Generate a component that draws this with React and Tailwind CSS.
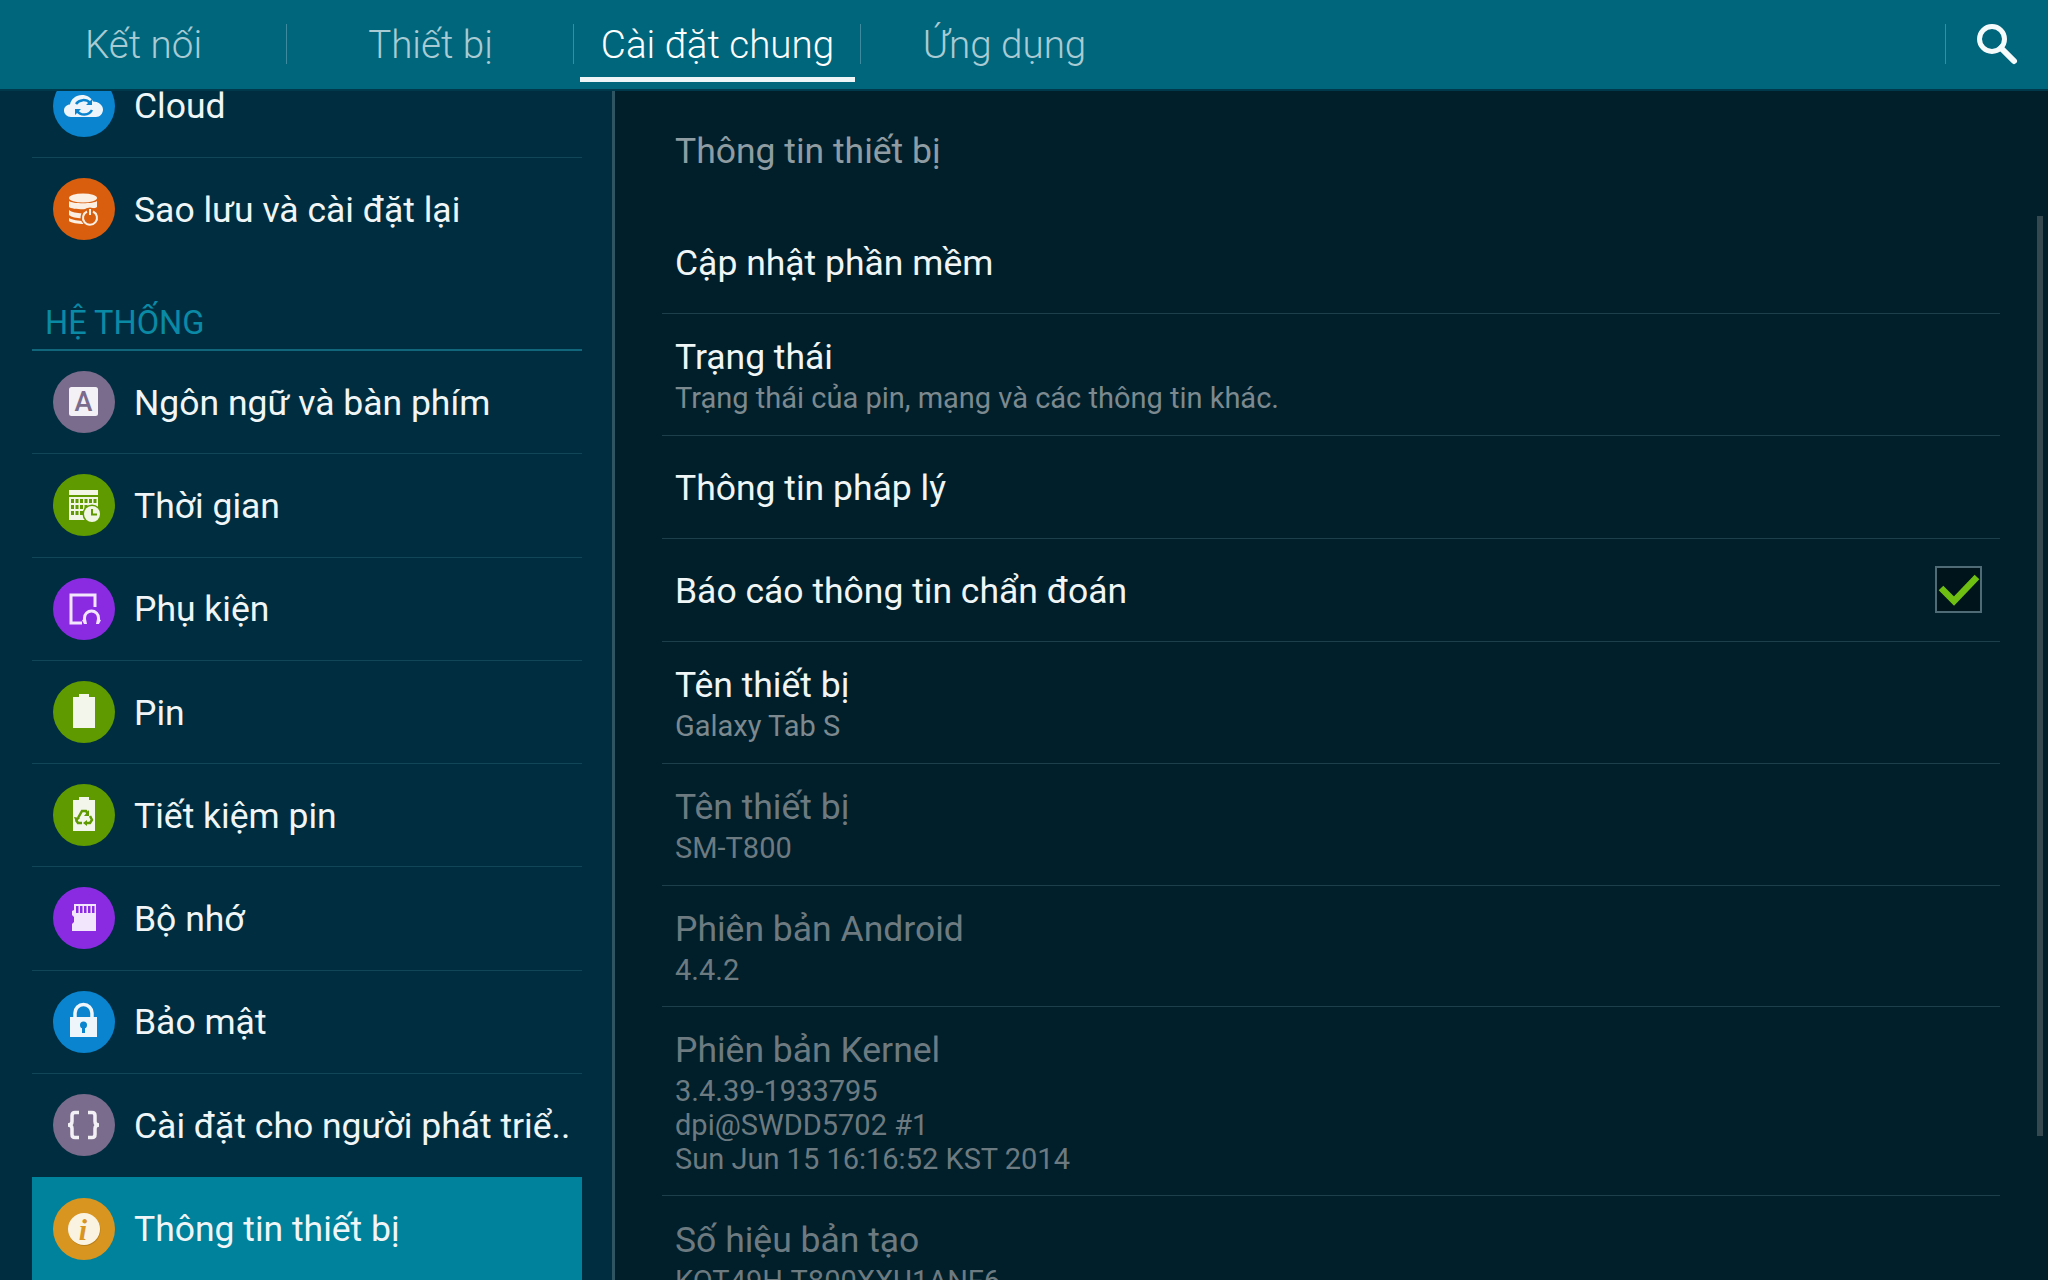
const FONT = { fontFamily: 'Roboto, "Noto Sans", sans-serif' }

function CloudIcon() {
  return (
    <svg viewBox="0 0 62 62" className="w-full h-full">
      <path d="M18 42c-4 0-7-3-7-6.500 0-3.500 3-6 6-6 1-5.500 6-9.500 12-9.500 5 0 9 2.500 11 6.500 5 0 10 3.500 10 8 0 4-3 7.500-7 7.500z" fill="#eef6fb" />
      <path d="M23 29a9 9 0 0 1 14-1M39 35a9 9 0 0 1-15 1" fill="none" stroke="#0a84cf" strokeWidth="2.500" />
      <path d="M39 24v6h-6zM22 40v-6h6z" fill="#0a84cf" />
    </svg>
  )
}

function BackupIcon() {
  return (
    <svg viewBox="0 0 62 62" className="w-full h-full">
      <ellipse cx="30" cy="20" rx="14" ry="4.500" fill="#fbeee3" />
      <path d="M16 23c3 3 25 3 28 0v6c-3 3-25 3-28 0zM16 32c3 3 12 3.500 16 3v5c-5 .5-13 0-16-3zM16 40c3 2 10 3 15 3v3c-6 0-13-1-15-3z" fill="#fbeee3" />
      <circle cx="37" cy="39" r="9.500" fill="#d95f0e" />
      <path d="M34 33.500a7 7 0 1 0 6 0" fill="none" stroke="#fbeee3" strokeWidth="2" />
      <path d="M37 31v6" stroke="#fbeee3" strokeWidth="2" />
    </svg>
  )
}

function LanguageIcon() {
  return (
    <svg viewBox="0 0 62 62" className="w-full h-full">
      <rect x="16" y="16" width="29" height="29" rx="2.500" fill="#f3f1f6" />
      <text x="30.500" y="40" textAnchor="middle" fontFamily="Roboto" fontWeight="500" fontSize="27" fill="#7a6c8c">A</text>
    </svg>
  )
}

function TimeIcon() {
  const cells = []
  for (let r = 0; r < 3; r++) {
    for (let c = 0; c < 6; c++) {
      if (r > 0 && c > 2 && !(r === 1 && c === 3)) continue
      cells.push(<rect key={`${r}-${c}`} x={18 + c * 4.500} y={25 + r * 6} width="3" height="4" fill="#5f9a00" />)
    }
  }
  return (
    <svg viewBox="0 0 62 62" className="w-full h-full">
      <rect x="16" y="16" width="29" height="5" fill="#f1f7e4" />
      <rect x="16" y="23" width="29" height="23" fill="#f1f7e4" />
      {cells}
      <circle cx="39" cy="40" r="9.500" fill="#5f9a00" />
      <circle cx="39" cy="40" r="8" fill="#f1f7e4" />
      <path d="M39 35v5.500h5" fill="none" stroke="#5f9a00" strokeWidth="2" />
    </svg>
  )
}

function AccessoryIcon() {
  return (
    <svg viewBox="0 0 62 62" className="w-full h-full">
      <path d="M29 45h-11v-28h24v12" fill="none" stroke="#f2e6fc" strokeWidth="3" />
      <path d="M31.500 44v-4a7 7 0 0 1 14 0v4" fill="none" stroke="#f2e6fc" strokeWidth="3" />
      <path d="M29 42l4-1 1 5h-3zM48 42l-4-1-1 5h3z" fill="#f2e6fc" />
    </svg>
  )
}

function BatteryIcon() {
  return (
    <svg viewBox="0 0 62 62" className="w-full h-full">
      <path d="M26 13h10v3h6v31h-22v-31h6z" fill="#f3f6ea" />
    </svg>
  )
}

function SaverIcon() {
  return (
    <svg viewBox="0 0 62 62" className="w-full h-full">
      <path d="M26 13h10v3h6v31h-22v-31h6z" fill="#f3f6ea" />
      <g fill="none" stroke="#5f9a00" strokeWidth="2.500">
        <path d="M25 34l4-7h4l2 3" />
        <path d="M37 32l2 4-2 3h-5" />
        <path d="M29 39h-4l-2-3" />
      </g>
      <path d="M36 26v6h-5zM34 36v6l-4-3zM21 33l6 1-4 4z" fill="#5f9a00" />
    </svg>
  )
}

function StorageIcon() {
  return (
    <svg viewBox="0 0 62 62" className="w-full h-full">
      <path d="M21 17h22v27h-24v-7l2-2v-5l-2-2v-4l2-1z" fill="#f2e6fc" />
      <g fill="#8a2be2">
        <rect x="23" y="19" width="2.500" height="7" />
        <rect x="27" y="19" width="2.500" height="7" />
        <rect x="31" y="19" width="2.500" height="7" />
        <rect x="35" y="19" width="2.500" height="7" />
        <rect x="39" y="19" width="2.500" height="7" />
      </g>
    </svg>
  )
}

function LockIcon() {
  return (
    <svg viewBox="0 0 62 62" className="w-full h-full">
      <path d="M22 27v-5a8.500 8.500 0 0 1 17 0v5" fill="none" stroke="#eef6fb" strokeWidth="3.500" />
      <rect x="17" y="26" width="27" height="20" fill="#eef6fb" />
      <circle cx="30.500" cy="34" r="3.500" fill="#0a84cf" />
      <rect x="29" y="35" width="3" height="7" fill="#0a84cf" />
    </svg>
  )
}

function DevIcon() {
  return (
    <svg viewBox="0 0 62 62" className="w-full h-full">
      <g fill="none" stroke="#f3f1f6" strokeWidth="3.500">
        <path d="M26 18.500h-4c-2 0-3 1-3 3v6c0 2-1.500 3.500-4 3.500 2.500 0 4 1.500 4 3.500v6c0 2 1 3 3 3h4" />
        <path d="M35 18.500h4c2 0 3 1 3 3v6c0 2 1.500 3.500 4 3.500-2.500 0-4 1.500-4 3.500v6c0 2-1 3-3 3h-4" />
      </g>
    </svg>
  )
}

function InfoIcon() {
  return (
    <svg viewBox="0 0 62 62" className="w-full h-full">
      <circle cx="31.500" cy="32" r="16" fill="#b9801a" />
      <circle cx="31" cy="31" r="16" fill="#fbf3e2" />
      <text x="30" y="42" textAnchor="middle" fontFamily="Liberation Serif" fontWeight="700" fontStyle="italic" fontSize="30" fill="#d8951f">i</text>
    </svg>
  )
}

function NavRow({ label, color, icon, active, last }) {
  return (
    <div className={`h-[103.25px] shrink-0 flex items-center pl-[21px] ${active ? 'bg-[#00819c]' : ''} ${last ? '' : 'border-b border-[#114558]'}`}>
      <div className={`w-[62px] h-[62px] rounded-full shrink-0 ${color}`}>{icon}</div>
      <span className="ml-[19px] pt-[3px] text-[35.5px] leading-none text-[#f0f6f7] whitespace-nowrap">{label}</span>
    </div>
  )
}

function InfoRow({ title, lines, height, dim, checked, last }) {
  const titleColor = dim ? 'text-[#6d7a80]' : 'text-[#f0f5f6]'
  const subColor = dim ? 'text-[#6d7a80]' : 'text-[#7c898e]'
  return (
    <div className={`${height} shrink-0 flex items-center justify-between px-[13px] ${last ? '' : 'border-b border-[#1d3f4b]'}`}>
      <div className="pt-[2px]">
        <div className={`text-[35.5px] leading-[42px] ${titleColor}`}>{title}</div>
        {lines && (
          <div className={`mt-[3px] text-[29px] leading-[34px] ${subColor}`}>
            {lines.map((l) => (
              <div key={l}>{l}</div>
            ))}
          </div>
        )}
      </div>
      {checked && (
        <div className="w-[47px] h-[47px] mr-[5px] mb-[2px] border-2 border-[#4f6b75] bg-[#00141c] shrink-0">
          <svg viewBox="0 0 43 43" className="w-full h-full">
            <path d="M4 20l13 13 23-24" fill="none" stroke="#6fbf12" strokeWidth="6.500" />
          </svg>
        </div>
      )}
    </div>
  )
}

const TABS = ['Kết nối', 'Thiết bị', 'Cài đặt chung', 'Ứng dụng']

export default function App() {
  return (
    <div className="relative w-[2048px] h-[1280px] overflow-hidden flex flex-col bg-[#001f2b]" style={FONT}>
      {/* top tab bar */}
      <div className="h-[91px] shrink-0 flex bg-[#00667c] border-b-2 border-[#00384c]">
        {TABS.map((t, i) => (
          <div key={t} className="relative w-[287px] shrink-0 flex items-center justify-center">
            <span className={`text-[38.6px] leading-none font-light pt-[1px] ${i === 2 ? 'text-white' : 'text-[#a9cbd3]'}`}>{t}</span>
            {i < 3 && <div className="absolute right-0 top-[24px] h-[40px] w-px bg-[#3d8b9c]" />}
            {i === 2 && <div className="absolute left-[6px] right-[6px] top-[77px] h-[5px] bg-[#eef5f6]" />}
          </div>
        ))}
        <div className="flex-1" />
        <div className="w-[103px] shrink-0 flex items-start border-l border-[#3d8b9c] mt-[24px] h-[40px]">
          <svg viewBox="0 0 50 50" className="w-[50px] h-[50px] ml-[24px] mt-[-7px] overflow-visible">
            <circle cx="22" cy="22" r="12.500" fill="none" stroke="#f5fafb" strokeWidth="5" />
            <path d="M31 31l13 13" stroke="#f5fafb" strokeWidth="6" strokeLinecap="round" />
          </svg>
        </div>
      </div>

      <div className="flex-1 min-h-0 flex">
        {/* left list */}
        <div className="w-[615px] shrink-0 bg-[#002e40] border-r-[3px] border-[#2f5563] overflow-hidden pl-8 pr-[30px]">
          <div className="-mt-[36.5px] flex flex-col">
            <NavRow label="Cloud" color="bg-[#0a84cf]" icon={<CloudIcon />} />
            <NavRow label="Sao lưu và cài đặt lại" color="bg-[#d95f0e]" icon={<BackupIcon />} last />
            <div className="h-[90px] shrink-0 flex items-end pl-[13px] pb-[10px] border-b-2 border-[#12667c] text-[32.5px] leading-none text-[#0b8aa6]">
              HỆ THỐNG
            </div>
            <NavRow label="Ngôn ngữ và bàn phím" color="bg-[#7a6c8c]" icon={<LanguageIcon />} />
            <NavRow label="Thời gian" color="bg-[#5f9a00]" icon={<TimeIcon />} />
            <NavRow label="Phụ kiện" color="bg-[#8a2be2]" icon={<AccessoryIcon />} />
            <NavRow label="Pin" color="bg-[#5f9a00]" icon={<BatteryIcon />} />
            <NavRow label="Tiết kiệm pin" color="bg-[#5f9a00]" icon={<SaverIcon />} />
            <NavRow label="Bộ nhớ" color="bg-[#8a2be2]" icon={<StorageIcon />} />
            <NavRow label="Bảo mật" color="bg-[#0a84cf]" icon={<LockIcon />} />
            <NavRow label="Cài đặt cho người phát triể.." color="bg-[#7a6c8c]" icon={<DevIcon />} last />
            <NavRow label="Thông tin thiết bị" color="bg-[#d8951f]" icon={<InfoIcon />} active last />
          </div>
        </div>

        {/* right detail */}
        <div className="flex-1 min-w-0 overflow-hidden pl-[47px] pr-[48px] flex flex-col">
          <div className="h-[120px] shrink-0 flex items-center px-[13px] pt-[2px] text-[35.5px] leading-none text-[#8f9ca1]">
            Thông tin thiết bị
          </div>
          <InfoRow title="Cập nhật phần mềm" height="h-[103px]" />
          <InfoRow title="Trạng thái" lines={['Trạng thái của pin, mạng và các thông tin khác.']} height="h-[122px]" />
          <InfoRow title="Thông tin pháp lý" height="h-[103px]" />
          <InfoRow title="Báo cáo thông tin chẩn đoán" height="h-[103px]" checked />
          <InfoRow title="Tên thiết bị" lines={['Galaxy Tab S']} height="h-[122px]" />
          <InfoRow title="Tên thiết bị" lines={['SM-T800']} height="h-[122px]" dim />
          <InfoRow title="Phiên bản Android" lines={['4.4.2']} height="h-[121px]" dim />
          <InfoRow title="Phiên bản Kernel" lines={['3.4.39-1933795', 'dpi@SWDD5702 #1', 'Sun Jun 15 16:16:52 KST 2014']} height="h-[189px]" dim />
          <InfoRow title="Số hiệu bản tạo" lines={['KOT49H.T800XXU1ANF6']} height="h-[122px]" dim last />
        </div>
      </div>

      {/* scrollbar thumb sits over the list */}
      <div className="absolute left-[2037px] top-[216px] w-[6px] h-[920px] bg-[#33494f]" />
    </div>
  )
}
